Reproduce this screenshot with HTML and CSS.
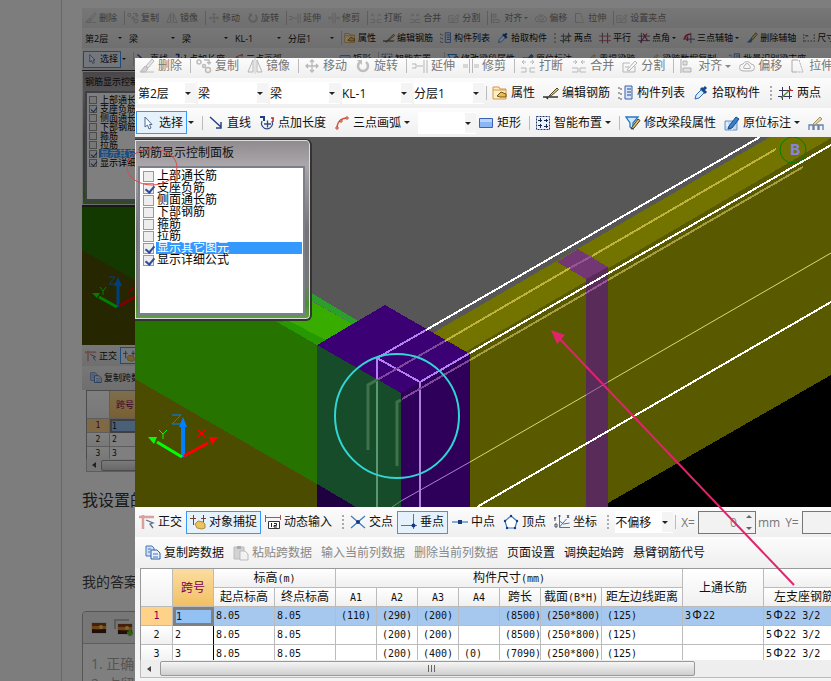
FILE: index.html
```html
<!DOCTYPE html>
<html lang="zh-CN">
<head>
<meta charset="utf-8">
<title>钢筋显示控制面板</title>
<link rel="stylesheet" href="styles.css">
</head>
<body>
<svg class="defs" aria-hidden="true">
<defs>
<symbol id="erase" viewBox="0 0 16 16"><path d="M1 14h5l3-3-3-3z" fill="#d0d0d0" stroke="#bbb"/><path d="M7 8l6-7 2 2-6 7z" fill="#e4e4e4" stroke="#bbb"/><path d="M2 14h13" stroke="#bbb"/></symbol>
<symbol id="copy" viewBox="0 0 16 16"><g fill="none" stroke="#bcbcbc" stroke-width="1.5"><circle cx="3" cy="4" r="2"/><circle cx="12" cy="12" r="2.5"/><circle cx="8" cy="8" r="1.5"/><path d="M8 2h5v4M11 4l2 2 2-2"/></g></symbol>
<symbol id="mirror" viewBox="0 0 16 16"><path d="M6 2v12H1zM10 2v12h5z" fill="none" stroke="#b5b5b5"/><path d="M8 0v16" stroke="#ccc"/></symbol>
<symbol id="move" viewBox="0 0 16 16"><path d="M8 2v12M2 8h12M6 4l2-2 2 2M6 12l2 2 2-2M4 6L2 8l2 2M12 6l2 2-2 2" fill="none" stroke="#b8b8b8" stroke-width="1.3"/></symbol>
<symbol id="rotate" viewBox="0 0 16 16"><path d="M5 4a5 5 0 1 0 6 0" fill="none" stroke="#bebebe" stroke-width="2.6"/><path d="M2 2h5v5z" fill="#bebebe"/></symbol>
<symbol id="extend" viewBox="0 0 16 16"><path d="M0 6h4v4H0M5 8h6M12 2v13M15 2v13" fill="none" stroke="#b5b5b5"/></symbol>
<symbol id="trim" viewBox="0 0 16 16"><path d="M0 7h5M0 9h5M11 7h5M11 9h5M6.500 1v14M9.500 1v14" fill="none" stroke="#b8b8b8"/></symbol>
<symbol id="break" viewBox="0 0 16 16"><path d="M2 4h4M4 2L2 4l2 2M10 4h4M12 2l2 2-2 2M1 10h5v4H1M15 10h-5v4h5" fill="none" stroke="#b8b8b8"/></symbol>
<symbol id="merge" viewBox="0 0 16 16"><path d="M2 4h4M4 2l2 2-2 2M10 4h4M12 2l-2 2 2 2M1 10h6v4H1M15 10H9v4h6" fill="none" stroke="#b8b8b8"/></symbol>
<symbol id="split" viewBox="0 0 16 16"><path d="M8 5H1v9h12V8M3 9h4M5 12l8-9 2 2-8 8z" fill="none" stroke="#b5b5b5"/></symbol>
<symbol id="align" viewBox="0 0 16 16"><path d="M2 1v14" stroke="#a5a5a5"/><path d="M4 3h4v4H4zM4 10h8v4H4z" fill="#e2e2e2" stroke="#b2b2b2"/></symbol>
<symbol id="offset" viewBox="0 0 16 16"><path d="M4 13a3.500 3.500 0 0 1 0-7 4.500 4.500 0 0 1 8 0 3.500 3.500 0 0 1 0 7zM5 10.500h6a2 2 0 0 0-1-3 2 2 0 0 0-4 0 2 2 0 0 0-1 3z" fill="none" stroke="#b2b2b2"/></symbol>
<symbol id="stretch" viewBox="0 0 16 16"><path d="M6 2H2v12h4" fill="none" stroke="#aaa"/><path d="M6 2h3l4 12H6" fill="none" stroke="#aaa" stroke-dasharray="2 1"/></symbol>
<symbol id="prop" viewBox="0 0 16 16"><path d="M1 2h6l1 2h6v10H1z" fill="#ffefc4" stroke="#d99545"/><path d="M1 5h13" stroke="#d99545"/><path d="M5 11l4-4 5 2v3H8z" fill="#e8bf50" stroke="#6b5416"/></symbol>
<symbol id="editbar" viewBox="0 0 16 16"><path d="M0 12h3l2 2M3 12h12" fill="none" stroke="#333" stroke-width="1.300"/><path d="M6 11l8-8 1.500 1.500-7 6-3 1z" fill="#e8cf77" stroke="#504020"/></symbol>
<symbol id="list" viewBox="0 0 16 16"><path d="M1 2v2h3M1 7v2h3M1 12v2h3" fill="none" stroke="#555" stroke-dasharray="2 1"/><path d="M7 1h7v13H7z" fill="#d7e4fa" stroke="#3c61a8"/><path d="M9 4h4M9 7h4M9 10h4" stroke="#284a90"/></symbol>
<symbol id="picker" viewBox="0 0 16 16"><path d="M2 14l1-4 6-6 3 3-6 6z" fill="#dcecff" stroke="#2c6cb5"/><path d="M8 3l5 5M10 5l3-3" stroke="#174a8c" stroke-width="3"/></symbol>
<symbol id="twopt" viewBox="0 0 16 16"><path d="M4.500 2v13M11.500 1v13M1 5.500h14M0 11.500h14" stroke="#38385e"/><path d="M3 13L13 4" stroke="#4f9a30" stroke-width="1.500"/><path d="M10 5.500h5" stroke="#b02838"/></symbol>
<symbol id="parallel" viewBox="0 0 16 16"><path d="M4.500 1v14M11.500 1v14" stroke="#38385e"/><path d="M0 5.500h16M0 11.500h16" stroke="#b04050"/></symbol>
<symbol id="ptangle" viewBox="0 0 16 16"><path d="M4.500 1v14M0 5.500h16M0 11.500h16" stroke="#383870"/><path d="M3 14L12 2M7 2l6 10" stroke="#b02838" stroke-width="1.500"/></symbol>
<symbol id="threept" viewBox="0 0 16 16"><path d="M10.500 1v14M0 9.500h16" stroke="#383870"/><path d="M2 9c1-5 4-6 8-6M6 6v6" fill="none" stroke="#c02030" stroke-width="2"/></symbol>
<symbol id="brush" viewBox="0 0 16 16"><path d="M1 14h6l2-4-2-2z" fill="#4d78b8"/><path d="M7 8l6-7 2 2-6 7z" fill="#e6cb70" stroke="#5c5037"/></symbol>
<symbol id="dim" viewBox="0 0 16 16"><path d="M1 3v11M15 3v11M2 12h12" fill="none" stroke="#252525" stroke-dasharray="2 2"/><path d="M3 5h4" stroke="#3b9a3b" stroke-width="2"/></symbol>
<symbol id="cursor" viewBox="0 0 16 16"><path d="M5 2v10l2.500-2L9 14l2-1-1.500-3.500H12z" fill="#fff" stroke="#506a92"/></symbol>
<symbol id="line" viewBox="0 0 16 16"><path d="M2 2l11 10M13 7v6H8" fill="none" stroke="#24438c" stroke-width="1.500"/></symbol>
<symbol id="addlen" viewBox="0 0 16 16"><path d="M3 6a5.500 5.500 0 1 0 10 0M5 9h7M8.500 5.500v7" fill="none" stroke="#334b86" stroke-width="1.300"/><path d="M1 2h4v4" fill="none" stroke="#203f82" stroke-width="2"/><path d="M12 3h3M14 3v4" stroke="#ba3036" stroke-width="1.500"/></symbol>
<symbol id="arc" viewBox="0 0 16 16"><path d="M3 13C3 7 7 3 13 3" fill="none" stroke="#d5583e" stroke-width="1.300"/><path d="M2 12h2v2H2zM6 5h2v2H6zM12 2h2v2h-2z" fill="#fff" stroke="#bd4633"/></symbol>
<symbol id="rect" viewBox="0 0 16 16"><path d="M1.500 3.500h13v9h-13z" fill="#8ab6f5" stroke="#3c62b5"/><path d="M2 4h12v3H2z" fill="#b9d5fb"/></symbol>
<symbol id="smart" viewBox="0 0 16 16"><path d="M1.500 1.500h13v13h-13z" fill="#e9f1ff" stroke="#203864" stroke-dasharray="2 1"/><path d="M5.500 3v4M3 5.500h4M11.500 4v3M9 5.500h4M5.500 9v4M3 10.500h4M11.500 9v4M9 11.500h4" stroke="#1c2b45"/></symbol>
<symbol id="modprop" viewBox="0 0 16 16"><path d="M1 2h12L8 8v6l-3-2V8z" fill="#cfe8ff" stroke="#2478c2" stroke-width="1.300"/><path d="M7 12l6-8 2 1.500-6 7.500-3 1z" fill="#e4c265" stroke="#423b2a"/></symbol>
<symbol id="inplace" viewBox="0 0 16 16"><path d="M1 6h12v9H1z" fill="#c4daf5" stroke="#6b93c8"/><path d="M3 7v4h5v4" fill="none" stroke="#fff"/><path d="M5 11l7-9 3 2-7 9-4 1z" fill="#3b7dc8" stroke="#174a88"/></symbol>
<symbol id="bars" viewBox="0 0 16 16"><path d="M1 15v-5h4v5M6 15v-5h4v5M11 15v-5h4v5" fill="none" stroke="#6382b0" stroke-width="1.300"/><path d="M5 9l7-7 2 2-7 6z" fill="#e9d69a" stroke="#a09068"/></symbol>
<symbol id="ortho" viewBox="0 0 16 16"><path d="M0 3h15M4 1v14" stroke="#dba09c" stroke-width="2.500"/><path d="M7 6l7 3-3 1 3 4" fill="none" stroke="#58718f" stroke-width="1.300"/></symbol>
<symbol id="snap" viewBox="0 0 16 16"><path d="M3.500 1v10M13.500 1v7M0 4.500h6M11 4.500h5" stroke="#733b3c"/><path d="M5 10l3-3 5 1 2 2v4l-3 1-5-1z" fill="#ecc45f" stroke="#b58b3b"/></symbol>
<symbol id="dyn" viewBox="0 0 16 16"><path d="M0 3.500h16M.5 1v7M15.500 1v5" stroke="#a4565b"/><path d="M3.500 7.500h11v7h-11z" fill="#fff" stroke="#333"/><path d="M6.500 9v4M9 9.500h2.500v2H9v1.500h3" fill="none" stroke="#222"/></symbol>
<symbol id="cross" viewBox="0 0 16 16"><path d="M1 2l14 12M15 2L1 14" stroke="#397bbd" stroke-width="1.200"/><circle cx="8" cy="8" r="2" fill="#173980"/></symbol>
<symbol id="perp" viewBox="0 0 16 16"><path d="M0 11.500h16M12.500 0v15" stroke="#397bbd"/><circle cx="12.500" cy="11.500" r="2" fill="#173980"/></symbol>
<symbol id="mid" viewBox="0 0 16 16"><path d="M0 8h16" stroke="#397bbd" stroke-width="1.200"/><path d="M6 6h4v4H6z" fill="#173980"/></symbol>
<symbol id="vertex" viewBox="0 0 16 16"><path d="M8 2l6 5-2 7H4L2 7z" fill="#fff" stroke="#397bbd" stroke-width="1.200"/><g fill="#173980"><circle cx="8" cy="2" r="1.200"/><circle cx="14" cy="7" r="1.200"/><circle cx="12" cy="14" r="1.200"/><circle cx="4" cy="14" r="1.200"/><circle cx="2" cy="7" r="1.200"/></g></symbol>
<symbol id="coord" viewBox="0 0 16 16"><path d="M5.500 3v10.500H16M5.500 13l7-8M5.500 7l4 3 6-1" fill="none" stroke="#397bbd"/><circle cx="5.500" cy="2" r="1" fill="#173980"/><path d="M0 3l1 2 1-2M1 5v2M13 1l2 3M15 1l-2 3M1 10h2v3H1z" fill="none" stroke="#4a4a5a"/></symbol>
<symbol id="docs" viewBox="0 0 16 16"><path d="M1 1h6l2 2v8H1z" fill="#cfe0f8" stroke="#4573b4"/><path d="M6 5h6l3 3v6H6z" fill="#e7f1ff" stroke="#2c5ea8"/><path d="M8 9h5M8 12h5M3 4h3M3 7h2" stroke="#4573b4"/></symbol>
<symbol id="paste" viewBox="0 0 16 16"><path d="M1 2h10v12H1z" fill="#d2d2d2" stroke="#bbb"/><path d="M4 1h4v3H4z" fill="#aaa"/><path d="M7 6h5l3 3v6H7z" fill="#f2f2f2" stroke="#bbb"/></symbol>
<symbol id="photo" viewBox="0 0 16 12"><path d="M0 0h16v12H0z" fill="#ddd"/><path d="M1 1h14v10H1z" fill="#8a4015"/><path d="M1 4h14v3H1z" fill="#e88a28"/><circle cx="10" cy="5" r="2" fill="#ffd060"/><path d="M1 7l6 1 8-1v4H1z" fill="#3c2010"/></symbol>
</defs>
</svg>

<main class="page">
  <div class="thumb app">
    <div class="bar b1">
      <button class="t"><svg><use href="#erase"/></svg>删除</button><i class="sep"></i>
      <button class="t"><svg><use href="#copy"/></svg>复制</button><button class="t"><svg><use href="#mirror"/></svg>镜像</button><i class="sep"></i>
      <button class="t"><svg><use href="#move"/></svg>移动</button><button class="t"><svg><use href="#rotate"/></svg>旋转</button><i class="sep"></i>
      <button class="t"><svg><use href="#extend"/></svg>延伸</button><button class="t"><svg><use href="#trim"/></svg>修剪</button><i class="sep"></i>
      <button class="t"><svg><use href="#break"/></svg>打断</button><button class="t"><svg><use href="#merge"/></svg>合并</button><button class="t"><svg><use href="#split"/></svg>分割</button><i class="sep"></i>
      <button class="t dd"><svg><use href="#align"/></svg>对齐</button><button class="t"><svg><use href="#offset"/></svg>偏移</button><button class="t"><svg><use href="#stretch"/></svg>拉伸</button><i class="sep"></i>
      <button class="t"><svg><use href="#split"/></svg>设置夹点</button>
    </div>
    <div class="bar b2">
      <label class="combo first"><select aria-label="楼层"><option>第2层</option></select></label><label class="combo"><select aria-label="类别"><option>梁</option></select></label><label class="combo"><select aria-label="类型"><option>梁</option></select></label><label class="combo"><select aria-label="构件"><option>KL-1</option></select></label><label class="combo"><select aria-label="分层"><option>分层1</option></select></label><i class="sep"></i>
      <button class="t"><svg><use href="#prop"/></svg>属性</button><button class="t"><svg><use href="#editbar"/></svg>编辑钢筋</button><button class="t"><svg><use href="#list"/></svg>构件列表</button><button class="t"><svg><use href="#picker"/></svg>拾取构件</button><i class="grip"></i>
      <button class="t"><svg><use href="#twopt"/></svg>两点</button><button class="t"><svg><use href="#parallel"/></svg>平行</button><button class="t dd"><svg><use href="#ptangle"/></svg>点角</button><button class="t dd"><svg><use href="#threept"/></svg>三点辅轴</button><button class="t"><svg><use href="#brush"/></svg>删除辅轴</button><button class="t"><svg><use href="#dim"/></svg>尺寸</button>
    </div>
    <div class="bar b3">
      <button class="t on sel"><svg><use href="#cursor"/></svg>选择</button><i class="arrow"></i><i class="sep"></i>
      <button class="t"><svg><use href="#line"/></svg>直线</button><button class="t"><svg><use href="#addlen"/></svg>点加长度</button><button class="t dd"><svg><use href="#arc"/></svg>三点画弧</button><label class="combo short"><select aria-label="画法"><option></option></select></label>
      <button class="t"><svg><use href="#rect"/></svg>矩形</button><i class="sep"></i><button class="t dd"><svg><use href="#smart"/></svg>智能布置</button><i class="sep"></i>
      <button class="t"><svg><use href="#modprop"/></svg>修改梁段属性</button><button class="t dd"><svg><use href="#inplace"/></svg>原位标注</button><button class="t dd"><svg><use href="#bars"/></svg>重提梁跨</button><button class="t dd"><svg><use href="#bars"/></svg>梁跨数据复制</button><button class="t"><svg><use href="#list"/></svg>批量识别梁支座</button>
    </div>
    <div class="view">
      <svg class="scene" viewBox="82 70 749 275" preserveAspectRatio="xMinYMin slice"><path d="M82 70h749v275H82z" fill="#575757"/><path d="M82 200h130v145H82z" fill="#267300"/><path d="M82 250l130 74v21H82z" fill="#4c4c00"/><path d="M118 307v-25" stroke="#0080ff" stroke-width="3"/><path d="M114 286l4-9 4 9z" fill="#0080ff"/><path d="M117 307l-18-10" stroke="#0f0" stroke-width="3"/><path d="M92 293l8 0-3 5z" fill="#0f0"/><path d="M119 306l18-10" stroke="red" stroke-width="3"/><path d="M109 277h6l-6 7h6" fill="none" stroke="#0080ff"/><path d="M100 287l3 4 3-4M103 291v4" fill="none" stroke="#0f0"/><path d="M128 287l6 6M134 287l-6 6" stroke="red"/></svg>
      <section class="panel">
        <h2>钢筋显示控制面板</h2>
        <div class="checks">
          <label><input type="checkbox"><span>上部通长筋</span></label><label><input type="checkbox" checked><span>支座负筋</span></label><label><input type="checkbox"><span>侧面通长筋</span></label><label><input type="checkbox"><span>下部钢筋</span></label><label><input type="checkbox"><span>箍筋</span></label><label><input type="checkbox"><span>拉筋</span></label><label class="hl"><input type="checkbox" checked><span>显示其它图元</span></label><label><input type="checkbox" checked><span>显示详细公式</span></label>
        </div>
      </section>
    </div>
    <div class="bar b4"><button class="t"><svg><use href="#ortho"/></svg>正交</button><button class="t on"><svg><use href="#snap"/></svg>对象捕捉</button></div>
    <div class="bar b5"><button class="t"><svg><use href="#docs"/></svg>复制跨数据</button></div>
    <div class="gridbox">
      <table><colgroup><col class="cn"><col class="ck"></colgroup>
        <thead><tr><th></th><th class="gold">跨号</th></tr></thead>
        <tbody><tr class="cur"><th>1</th><td class="pick">1</td></tr><tr><th>2</th><td>2</td></tr><tr><th>3</th><td>3</td></tr></tbody>
      </table>
    </div>
    <div class="scroll"><span class="left"></span><span class="bead"></span></div>
  </div>
  <p class="asked">我设置的钢筋</p>
  <p class="mine">我的答案</p>
  <div class="editor">
    <div class="tools"><svg><use href="#photo"/></svg><svg class="multi" viewBox="0 0 20 18"><path d="M1 10V1h14" fill="none" stroke="#bbb" stroke-width="2"/><use href="#photo" x="3" y="4" width="16" height="12"/><path d="M16 11v6M13 14h6" stroke="#6b2" stroke-width="3"/></svg></div>
    <ol><li>正确答案</li><li>占留</li></ol>
  </div>
</main>
<div class="shade"></div>

<div class="lightbox app">
  <div class="bar b1">
    <button class="t"><svg><use href="#erase"/></svg>删除</button><i class="sep"></i>
    <button class="t"><svg><use href="#copy"/></svg>复制</button><button class="t"><svg><use href="#mirror"/></svg>镜像</button><i class="sep"></i>
    <button class="t"><svg><use href="#move"/></svg>移动</button><button class="t"><svg><use href="#rotate"/></svg>旋转</button><i class="sep"></i>
    <button class="t"><svg><use href="#extend"/></svg>延伸</button><button class="t"><svg><use href="#trim"/></svg>修剪</button><i class="sep"></i>
    <button class="t"><svg><use href="#break"/></svg>打断</button><button class="t"><svg><use href="#merge"/></svg>合并</button><button class="t"><svg><use href="#split"/></svg>分割</button><i class="sep"></i>
    <button class="t dd"><svg><use href="#align"/></svg>对齐</button><button class="t"><svg><use href="#offset"/></svg>偏移</button><button class="t"><svg><use href="#stretch"/></svg>拉伸</button>
  </div>
  <div class="bar b2">
    <label class="combo first"><select aria-label="楼层"><option>第2层</option></select></label><label class="combo"><select aria-label="类别"><option>梁</option></select></label><label class="combo"><select aria-label="类型"><option>梁</option></select></label><label class="combo"><select aria-label="构件"><option>KL-1</option></select></label><label class="combo"><select aria-label="分层"><option>分层1</option></select></label><i class="sep"></i>
    <button class="t"><svg><use href="#prop"/></svg>属性</button><button class="t"><svg><use href="#editbar"/></svg>编辑钢筋</button><button class="t"><svg><use href="#list"/></svg>构件列表</button><button class="t"><svg><use href="#picker"/></svg>拾取构件</button><i class="grip"></i>
    <button class="t"><svg><use href="#twopt"/></svg>两点</button>
  </div>
  <div class="bar b3">
    <button class="t on sel"><svg><use href="#cursor"/></svg>选择</button><i class="arrow"></i><i class="sep"></i>
    <button class="t"><svg><use href="#line"/></svg>直线</button><button class="t"><svg><use href="#addlen"/></svg>点加长度</button><button class="t dd"><svg><use href="#arc"/></svg>三点画弧</button><label class="combo short"><select aria-label="画法"><option></option></select></label>
    <button class="t"><svg><use href="#rect"/></svg>矩形</button><i class="sep"></i><button class="t dd"><svg><use href="#smart"/></svg>智能布置</button><i class="sep"></i>
    <button class="t"><svg><use href="#modprop"/></svg>修改梁段属性</button><button class="t dd"><svg><use href="#inplace"/></svg>原位标注</button><button class="t" aria-label="重提梁跨"><svg><use href="#bars"/></svg></button>
  </div>
  <div class="view">
    <svg class="scene" viewBox="135 137 696 370" preserveAspectRatio="xMinYMin slice">
      <g shape-rendering="crispEdges">
      <path d="M135 137h696v370H135z" fill="#575757"/>
      <path d="M470 350h361v157H470z" fill="#000"/>
      <path d="M280 274l78 47-6 3-72-42z" fill="#2b9e2b"/>
      <path d="M240 260l112 64-26 16-91-40z" fill="#39ac00"/>
      <path d="M230 296l47 26 12-1 37 19-9 6-87-40z" fill="#269900"/>
      <path d="M135 300h104l78 45v162H135z" fill="#267300"/>
      <path d="M135 379l182 105v23H135z" fill="#4c4c00"/>
      <path d="M433 333L770 137h61v1L465 352z" fill="#737300"/>
      <path d="M465 352L831 138v237L608 503v4H465z" fill="#595900"/>
      <path d="M557 262l21-13 30 18-22 12z" fill="#733873"/>
      <path d="M586 279l22-12v240h-22z" fill="#592b59"/>
      <path d="M317 345l68-40 85 49-69 39z" fill="#3b0073"/>
      <path d="M401 393l69-39v153h-69z" fill="#2e0059"/>
      <path d="M317 345l84 48v114h-84z" fill="#174c2b"/>
      <path d="M317 484l39 23h-39z" fill="#1f0040"/>
      </g>
      <g fill="none" stroke-width="2" shape-rendering="crispEdges">
      <path d="M426 330L760 137M470 353L831 145M477 507L831 302" stroke="#fff"/>
      <path d="M426 330l-49 28 43 24 50-29M377 358v23" stroke="#b380f8"/>
      <path d="M420 382v125" stroke="#ad80d9"/>
      <path d="M377 381v126" stroke="#5a9670"/>
      <path d="M445 341l125-73M592 256l184-107" stroke="#bfb340"/>
      <path d="M470 360l116-67M608 280l195-113" stroke="#a69c40"/>
      <path d="M570 268l22-12M586 293l22-13" stroke="#945694"/>
      <path d="M445 341l-68 39M470 360l-68 39" stroke="#7f479d"/>
      </g>
      <g fill="none">
      <path d="M401 501l69-39" stroke="#ad80d9"/>
      <path d="M470 462L586 395M608 382L831 253" stroke="#d9d973"/>
      <path d="M586 395l22-13" stroke="#a173a1"/>
      <path d="M392 507l9-6" stroke="#5a9670"/>
      <path d="M377 380l-9 5v65M401 400l-4 2v64" stroke="#3f714b" stroke-width="3"/>
      </g>
      <circle cx="793" cy="150" r="13" fill="none" stroke="#008000"/>
      <text x="790" y="155" class="axisname">B</text>
      <path d="M183 457v-32" stroke="#0080ff" stroke-width="4"/><path d="M179 427l4-10 4 10z" fill="#0080ff"/>
      <path d="M182 457l-25-15" stroke="#0f0" stroke-width="3"/><path d="M148 437h9l-3 7z" fill="#0f0"/>
      <path d="M184 456l24-13" stroke="red" stroke-width="3"/><path d="M218 437h-9l3 8z" fill="red"/>
      <path d="M172 415h9l-9 9h9" fill="none" stroke="#0080ff"/><path d="M159 430l4 4 4-4M163 434v5" fill="none" stroke="#0f0"/><path d="M197 429l9 9M206 429l-9 9" stroke="red"/>
    </svg>
    <section class="panel">
      <h2>钢筋显示控制面板</h2>
      <div class="checks">
        <label><input type="checkbox"><span>上部通长筋</span></label>
        <label><input type="checkbox" checked><span>支座负筋</span></label>
        <label><input type="checkbox"><span>侧面通长筋</span></label>
        <label><input type="checkbox"><span>下部钢筋</span></label>
        <label><input type="checkbox"><span>箍筋</span></label>
        <label><input type="checkbox"><span>拉筋</span></label>
        <label class="hl"><input type="checkbox" checked><span>显示其它图元</span></label>
        <label><input type="checkbox" checked><span>显示详细公式</span></label>
      </div>
    </section>
  </div>
  <div class="bar b4">
    <button class="t"><svg><use href="#ortho"/></svg>正交</button><button class="t on"><svg><use href="#snap"/></svg>对象捕捉</button><button class="t"><svg><use href="#dyn"/></svg>动态输入</button><i class="grip"></i>
    <button class="t"><svg><use href="#cross"/></svg>交点</button><button class="t on"><svg><use href="#perp"/></svg>垂点</button><button class="t"><svg><use href="#mid"/></svg>中点</button><button class="t"><svg><use href="#vertex"/></svg>顶点</button><button class="t"><svg><use href="#coord"/></svg>坐标</button><i class="grip"></i>
    <label class="combo short"><select aria-label="偏移"><option>不偏移</option></select></label><i class="sep"></i>
    <label class="xy">X=<input type="text" value="0"><span class="spin"></span></label><span class="mm">mm</span><label class="xy">Y=<input type="text"></label>
  </div>
  <div class="bar b5">
    <button class="t"><svg><use href="#docs"/></svg>复制跨数据</button><button class="t" disabled><svg><use href="#paste"/></svg>粘贴跨数据</button><button class="t" disabled>输入当前列数据</button><button class="t" disabled>删除当前列数据</button><button class="t">页面设置</button><button class="t">调换起始跨</button><button class="t">悬臂钢筋代号</button>
  </div>
  <div class="gridbox">
    <table>
      <colgroup><col class="cn"><col class="ck"><col class="cm"><col class="cm"><col class="ck"><col class="ck"><col class="ck"><col class="ck"><col class="ck"><col class="cm"><col class="cl"><col class="cl"><col class="cl"></colgroup>
      <thead>
        <tr><th rowspan="2"></th><th rowspan="2" class="gold">跨号</th><th colspan="2">标高<span>(m)</span></th><th colspan="7">构件尺寸<span>(mm)</span></th><th rowspan="2">上通长筋</th><th></th></tr>
        <tr><th>起点标高</th><th>终点标高</th><th><span>A1</span></th><th><span>A2</span></th><th><span>A3</span></th><th><span>A4</span></th><th>跨长</th><th>截面<span>(B*H)</span></th><th>距左边线距离</th><th>左支座钢筋</th></tr>
      </thead>
      <tbody>
        <tr class="cur"><th>1</th><td class="pick">1</td><td>8.05</td><td>8.05</td><td class="p">(110)</td><td class="p">(290)</td><td class="p">(200)</td><td></td><td class="p">(8500)</td><td class="p">(250*800)</td><td class="p">(125)</td><td>3<b>Φ</b>22</td><td>5<b>Φ</b>22 3/2</td></tr>
        <tr><th>2</th><td class="k">2</td><td>8.05</td><td>8.05</td><td></td><td class="p">(200)</td><td class="p">(200)</td><td></td><td class="p">(8500)</td><td class="p">(250*800)</td><td class="p">(125)</td><td></td><td>5<b>Φ</b>22 3/2</td></tr>
        <tr><th>3</th><td class="k">3</td><td>8.05</td><td>8.05</td><td></td><td class="p">(200)</td><td class="p">(400)</td><td class="p">(0)</td><td class="p">(7090)</td><td class="p">(250*800)</td><td class="p">(125)</td><td></td><td>5<b>Φ</b>22 3/2</td></tr>
      </tbody>
    </table>
  </div>
  <div class="scroll"><span class="left"></span><span class="bead"></span></div>
</div>

<svg class="marks" viewBox="0 0 831 681" aria-hidden="true">
  <ellipse cx="152" cy="167" rx="25" ry="18" fill="none" stroke="#e04848"/>
  <circle cx="397" cy="416" r="62" fill="none" stroke="#30d5d5" stroke-width="2"/>
  <path d="M794 585L558 337" stroke="#e0246c" stroke-width="2"/>
  <path d="M551 330l14 5-8 9z" fill="#e0246c"/>
</svg>
</body>
</html>
```
FILE: styles.css
```css
* { box-sizing: border-box; }
body {
  margin: 0;
  height: 100vh;
  overflow: hidden;
  background: #fafafa;
  color: #111;
  font-family: "Open Sans", "Noto Sans CJK SC", sans-serif;
}
.defs { position: absolute; width: 0; height: 0; }
.page {
  margin-left: 61px;
  padding: 8px 0 0 20px;
  border-left: 1px solid #d0d0d0;
  background: #fdfdfd;
  height: 100%;
  overflow: hidden;
}
.shade { position: fixed; inset: 0; background: rgba(0, 0, 0, .5); }
.lightbox {
  position: fixed;
  inset: 58px 0 0 135px;
  overflow: hidden;
  background: #f4f4f4;
}
.marks { position: absolute; top: 0; left: 0; width: 831px; height: 681px; pointer-events: none; }

/* application window, sized by these values */
.app {
  --icon: 16px;
  --text: 12px;
  --gap: 3px;
  --space: 8px;
  --after: 5px;
  --combo: 72px;
  --row: 30px;
  font-size: var(--text);
}
.thumb {
  --icon: 12px;
  --text: 9px;
  --gap: 2px;
  --space: 7px;
  --after: 2px;
  --combo: 53px;
  --row: 20px;
  overflow: hidden;
}
.bar {
  display: flex;
  align-items: center;
  height: var(--row);
  padding-left: 4px;
  background: linear-gradient(#fcfcfc, #efefef);
  white-space: nowrap;
  overflow: hidden;
}
.thumb .bar { padding-left: 3px; background: linear-gradient(#eee, #dedede); }
.lightbox .b1 { height: 20px; padding-bottom: 4px; }
.b1 { color: #777; }
.t {
  display: inline-flex;
  align-items: center;
  flex: none;
  gap: var(--gap);
  margin: 0 var(--space) 0 0;
  padding: 0;
  border: 0;
  background: none;
  color: inherit;
  font: inherit;
  line-height: 16px;
}
.t:disabled { color: #888; }
.t svg { width: var(--icon); height: var(--icon); flex: none; }
.dd::after, .arrow, .combo::after {
  content: "";
  flex: none;
  border: 3px solid transparent;
  border-top-color: #222;
  border-bottom: 0;
}
.thumb .dd::after, .thumb .arrow, .thumb .combo::after { border-width: 2px 2px 0; }
.b1 .dd::after { border-top-color: #888; }
.on {
  height: 23px;
  margin: 0 4px 0 0;
  padding: 0 3px;
  border: 1px solid #3399ff;
  background: #e5f1fb;
}
.thumb .on { height: 17px; padding: 0 2px; }
.sep { flex: none; width: 1px; height: 14px; margin-right: var(--after); background: #bbb; }
.grip { flex: none; width: 3px; height: 14px; margin: 0 5px 0 2px; border-left: 2px dotted #aaa; }
.thumb .grip { height: 10px; margin: 0 3px 0 0; }
.arrow { margin: 0 var(--space) 0 0; }
.b3 .on { margin-right: 1px; }
.combo { position: relative; flex: none; width: var(--combo); }
.combo::after { position: absolute; right: 7px; top: calc(50% - 1px); pointer-events: none; }
.combo select {
  appearance: none;
  display: block;
  width: calc(100% - 2px);
  height: 22px;
  padding: 0;
  border: 0;
  border-radius: 0;
  background: linear-gradient(#f4f4f4, #f4f4f4) right / 11px 20px no-repeat #fff;
  color: #111;
  font: inherit;
}
.thumb .combo select { height: 15px; background: none; }
.first { width: 60px; }
.thumb .first { width: 44px; }
.short { width: 60px; }
.thumb .short { width: 44px; }
.lightbox .b2 { padding-left: 3px; }
.lightbox .b3 { padding-left: 1px; height: 29px; }
.thumb .b3 { padding-left: 1px; height: 22px; }

/* model view */
.view { position: relative; height: 370px; overflow: hidden; }
.thumb .view { height: 275px; }
.scene { display: block; width: 100%; height: 100%; }
.axisname { font: bold 17px "Liberation Mono", monospace; fill: #8585df; }
.panel {
  position: absolute;
  top: 2px;
  left: 0;
  width: 177px;
  height: 182px;
  padding: 4px 5px 5px 2px;
  border: 2px solid #333;
  border-width: 1px 2px 2px 0;
  border-radius: 0 6px 6px 0;
  background: linear-gradient(#8e8a8e, #aaa6aa 14%, #777377 50%, #777 80%, #4c9030 92%, #5f9f48);
  box-shadow: inset 0 0 0 1px #ddd;
}
.panel h2 { margin: 0; padding-left: 1px; font-size: var(--text); font-weight: 400; line-height: 18px; color: #111; }
.checks { height: 149px; margin: 4px 0 0 1px; padding: 2px 1px 2px 3px; border: 2px solid #7b8088; background: #fff; line-height: 12px; overflow: hidden; }
.checks label { display: flex; align-items: center; height: 12px; }
.checks input {
  appearance: none;
  flex: none;
  position: relative;
  width: 11px;
  height: 11px;
  margin: 0 2px 0 0;
  border: 1px solid #999;
  background: #eee;
}
.checks input:checked::after {
  content: "";
  position: absolute;
  left: 3px;
  top: 0;
  width: 4px;
  height: 7px;
  border: solid #2f4d9c;
  border-width: 0 2px 2px 0;
  transform: rotate(40deg);
}
.checks span { flex: 1; padding-left: 1px; color: #000; }
.hl span { background: #3399ff; color: #fff; }
.thumb .panel { top: 0; width: 130px; height: 137px; padding: 4px 4px 4px 2px; }
.thumb .panel h2 { line-height: 14px; }
.thumb .checks { height: 110px; margin-top: 2px; padding: 2px; }
.thumb .checks label { height: 9px; line-height: 9px; }
.thumb .checks input { width: 8px; height: 8px; }
.thumb .checks input:checked::after { left: 2px; width: 3px; height: 5px; border-width: 0 1px 1px 0; }

/* snap bar and data bar */
.b4 .on { margin-left: -4px; }
.xy { display: inline-flex; align-items: center; flex: none; position: relative; gap: 3px; color: #777; font-size: 12px; }
.xy input { width: 58px; height: 23px; padding: 0 18px 0 0; border: 1px solid #777; background: #f2f2f2; color: #888; font: inherit; text-align: right; }
.spin { position: absolute; right: 4px; top: 4px; width: 6px; height: 15px; }
.spin::before, .spin::after { content: ""; position: absolute; left: 0; border: 3px solid transparent; }
.spin::before { top: -3px; border-bottom-color: #666; }
.spin::after { bottom: -3px; border-top-color: #666; }
.mm { margin: 0 5px 0 2px; color: #777; font-size: 12px; }
.b4 { height: 30px; }
.lightbox .b5 { height: 31px; padding-left: 10px; }
.lightbox .b5 .t { margin-right: 9px; }
.thumb .b4 { height: 21px; }
.thumb .b5 { height: 24px; padding-left: 8px; }

/* span table */
.gridbox { height: 92px; margin-left: 5px; border: 1px solid #999; border-width: 1px 0 0 1px; background: #fff; overflow: hidden; }
table { width: 100%; min-width: 704px; table-layout: fixed; border-collapse: separate; border-spacing: 0; }
.cn { width: 32px; }
.ck { width: 41px; }
.cm { width: 61px; }
.cl { width: 81px; }
th, td { height: 19px; padding: 0; border: solid #bbb; border-width: 0 1px 1px 0; line-height: 16px; font-weight: 400; white-space: nowrap; overflow: hidden; }
th { background: linear-gradient(#fff, #f0f0f0); }
th span, td, tbody th { font-family: "DejaVu Sans Mono", "Noto Sans CJK SC", monospace; font-size: 10px; }
th span { line-height: 10px; }
td { padding-left: 2px; }
.p { padding-left: 5px; }
td b { display: inline-block; width: 12px; font: 400 12px/10px "Liberation Sans", sans-serif; text-align: center; }
.gold { background: linear-gradient(#fbdda0, #f2c064); color: #800050; }
.cur td { background: #a6c8ef; }
.cur th { background: #ffd28a; color: #800050; }
.cur .pick { border: 3px solid #808080; padding: 0; line-height: 12px; background: #94c1f3; }
.k { border-right-color: #000; }
.scroll { display: flex; align-items: center; height: 18px; margin-left: 5px; border: 1px solid #bbb; border-width: 0 0 1px 1px; background: #eee; }
.left { flex: none; margin: 0 9px 0 6px; border: 3px solid transparent; border-width: 3px 4px 3px 0; border-right-color: #444; }
.bead { position: relative; flex: 0 1 535px; height: 15px; border: 1px solid #999; border-radius: 2px; background: linear-gradient(#f5f5f5, #cfcfcf); }
.bead::after { content: ""; position: absolute; left: 50%; top: 3px; width: 8px; height: 7px; background: repeating-linear-gradient(90deg, #666 0 1px, transparent 1px 3px); }
.thumb .gridbox { height: 69px; margin-left: 4px; }
.thumb .gridbox table { width: 54px; min-width: 54px; }
.thumb .cn { width: 23px; }
.thumb .ck { width: 31px; }
.thumb thead th { height: 28px; }
.thumb td, .thumb tbody th { height: 14px; line-height: 12px; font-size: 8px; }
.thumb .cur .pick { border-width: 2px; line-height: 9px; }
.thumb .scroll { height: 13px; margin-left: 4px; }
.thumb .left { margin: 0 5px; }
.thumb .bead { height: 11px; }

/* question page */
.asked { margin: 16px 0 0; font-size: 16px; line-height: 24px; color: #333; }
.mine { margin: 60px 0 0; font-size: 14px; line-height: 20px; color: #444; }
.editor { margin-top: 19px; border: 1px solid #aaa; border-radius: 4px; background: #fff; overflow: hidden; }
.tools { display: flex; align-items: center; gap: 7px; height: 32px; padding-left: 8px; border-bottom: 1px solid #bbb; background: #eee; }
.tools svg { width: 16px; height: 12px; }
.tools .multi { width: 20px; height: 18px; }
.editor ol { margin: 10px 0 0; padding: 0 0 0 8px; list-style-position: inside; color: #aaa; font-size: 14px; line-height: 20px; }
```
